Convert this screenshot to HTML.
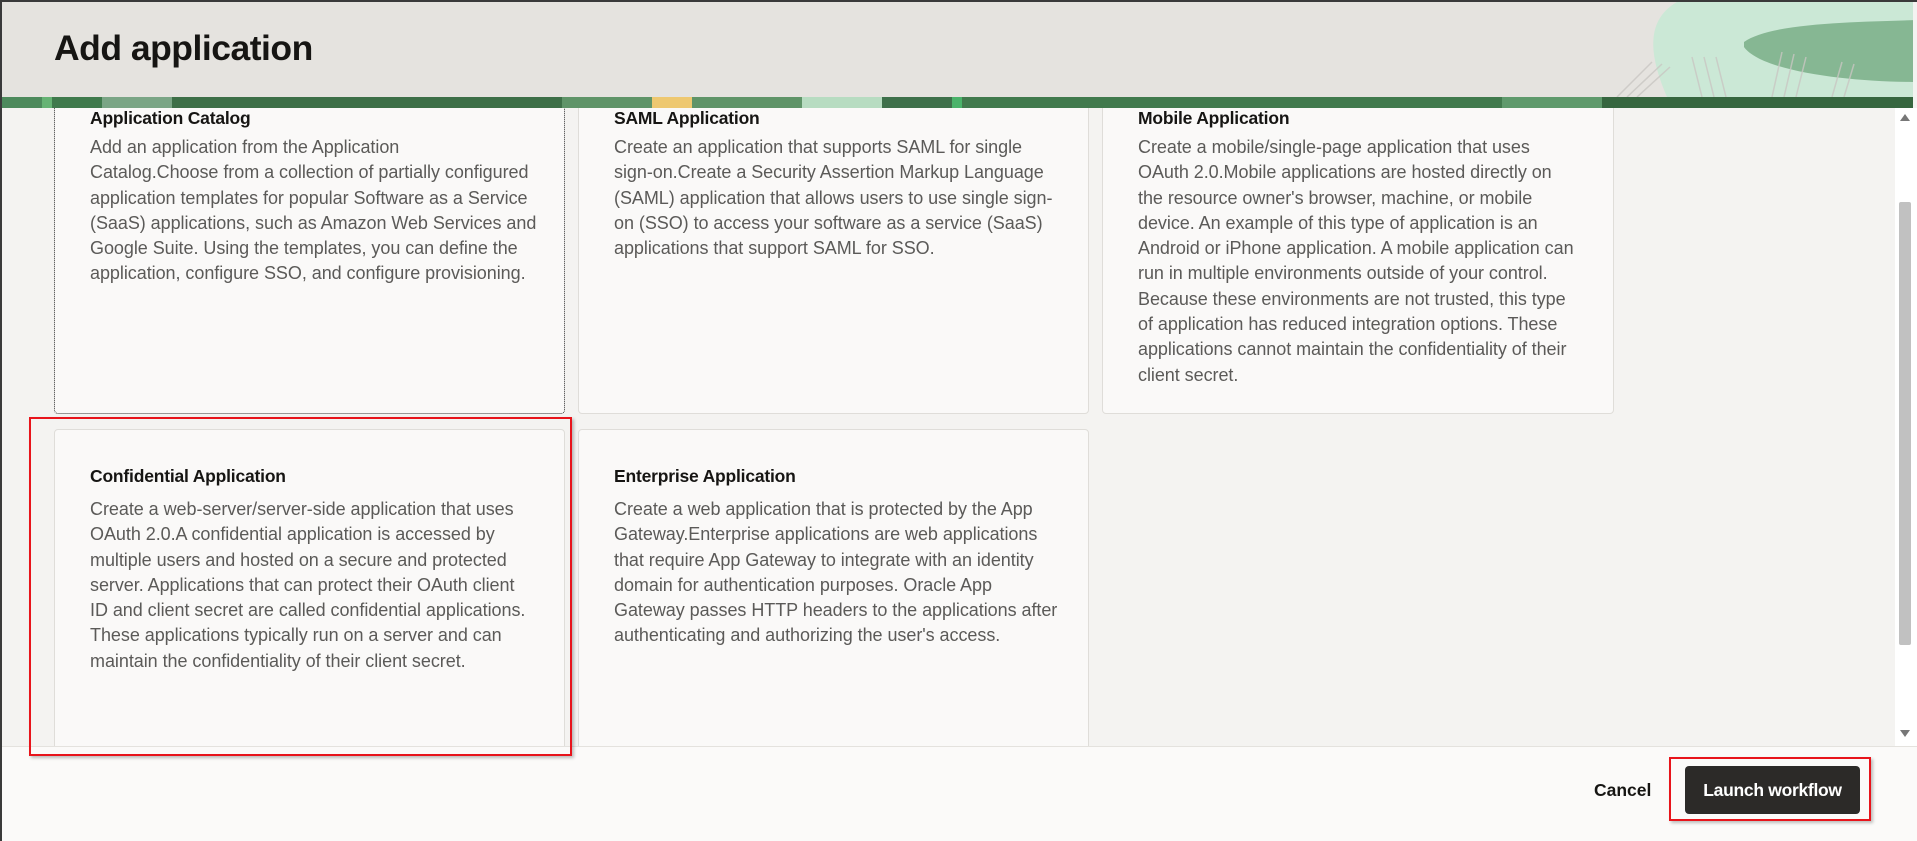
<!DOCTYPE html>
<html><head><meta charset="utf-8"><style>
*{box-sizing:border-box;margin:0;padding:0}
body{width:1917px;height:841px;overflow:hidden;background:#f4f3f1;font-family:"Liberation Sans",sans-serif;position:relative}
.frame{position:absolute;left:0;top:0;width:1917px;height:841px;border-top:2px solid #3a3a3a;border-left:2px solid #3a3a3a;z-index:20}
.header{position:absolute;left:2px;top:2px;width:1911px;height:95px;background:#e5e3df;overflow:hidden;z-index:10}
.header h1{position:absolute;left:52px;top:26px;font-size:35.5px;font-weight:bold;color:#161513;letter-spacing:-0.5px}
.band{position:absolute;left:2px;top:97px;width:1911px;height:11px;z-index:10;background:linear-gradient(90deg,#4d8a5c 0,#4d8a5c 40px,#66b374 40px,#66b374 50px,#3f7a4c 50px,#3f7a4c 100px,#7aa585 100px,#7aa585 170px,#3d6f47 170px,#3d6f47 560px,#5f9468 560px,#5f9468 650px,#eec870 650px,#eec870 690px,#5f9468 690px,#5f9468 800px,#b7dcc1 800px,#b7dcc1 880px,#3e704a 880px,#3e704a 950px,#4ab36a 950px,#4ab36a 960px,#417a4d 960px,#417a4d 1500px,#5f9a6c 1500px,#5f9a6c 1600px,#36663f 1600px)}
.card{position:absolute;background:#faf9f8;border:1px solid #dfddd9;border-radius:4px}
.card h3{position:absolute;left:35px;font-size:17.5px;font-weight:bold;color:#161513;letter-spacing:-0.2px}
.card p{position:absolute;left:35px;font-size:18px;line-height:25.3px;color:#5b5a58;letter-spacing:-0.05px;white-space:nowrap}
.footer{position:absolute;left:2px;top:746px;width:1915px;height:95px;background:#fbfaf9;border-top:1px solid #e4e2de;z-index:5}
.sb{position:absolute;left:1895px;top:108px;width:22px;height:638px;background:#fff}
.thumb{position:absolute;left:1899px;top:202px;width:12px;height:443px;background:#c1c1c1;border-radius:2px}
</style></head><body>
<div class="header">
<h1>Add application</h1>
<svg style="position:absolute;left:0;top:0" width="1911" height="95">
<path d="M1675 0 L1913 0 L1913 95 L1665 95 C1650 60 1640 20 1675 0Z" fill="#cbe8d6"/>
<path d="M1742 40 C1770 20 1860 20 1913 18 L1913 80 C1850 80 1760 70 1742 45Z" fill="#86b793"/>
<g stroke="#c8c6c2" stroke-width="1.5" fill="none" opacity="0.8">
<path d="M1615 95 L1650 60 M1625 95 L1660 62 M1635 95 L1668 65 M1700 95 L1690 55 M1712 95 L1702 55 M1724 95 L1714 55 M1770 95 L1780 50 M1782 95 L1792 52 M1794 95 L1804 55 M1830 95 L1840 60 M1842 95 L1852 62"/>
</g>
</svg>
</div>
<div class="band"></div>

<div class="card" style="left:54px;top:90px;width:511px;height:324px;border:1px dotted #333">
<h3 style="top:17px">Application Catalog</h3>
<p style="top:44px">Add an application from the Application<br>Catalog.Choose from a collection of partially configured<br>application templates for popular Software as a Service<br>(SaaS) applications, such as Amazon Web Services and<br>Google Suite. Using the templates, you can define the<br>application, configure SSO, and configure provisioning.</p>
</div>
<div class="card" style="left:578px;top:90px;width:511px;height:324px">
<h3 style="top:17px">SAML Application</h3>
<p style="top:44px">Create an application that supports SAML for single<br>sign-on.Create a Security Assertion Markup Language<br>(SAML) application that allows users to use single sign-<br>on (SSO) to access your software as a service (SaaS)<br>applications that support SAML for SSO.</p>
</div>
<div class="card" style="left:1102px;top:90px;width:512px;height:324px">
<h3 style="top:17px">Mobile Application</h3>
<p style="top:44px">Create a mobile/single-page application that uses<br>OAuth 2.0.Mobile applications are hosted directly on<br>the resource owner's browser, machine, or mobile<br>device. An example of this type of application is an<br>Android or iPhone application. A mobile application can<br>run in multiple environments outside of your control.<br>Because these environments are not trusted, this type<br>of application has reduced integration options. These<br>applications cannot maintain the confidentiality of their<br>client secret.</p>
</div>

<div class="card" style="left:54px;top:429px;width:511px;height:340px">
<h3 style="top:36px">Confidential Application</h3>
<p style="top:67px">Create a web-server/server-side application that uses<br>OAuth 2.0.A confidential application is accessed by<br>multiple users and hosted on a secure and protected<br>server. Applications that can protect their OAuth client<br>ID and client secret are called confidential applications.<br>These applications typically run on a server and can<br>maintain the confidentiality of their client secret.</p>
</div>
<div class="card" style="left:578px;top:429px;width:511px;height:340px">
<h3 style="top:36px">Enterprise Application</h3>
<p style="top:67px">Create a web application that is protected by the App<br>Gateway.Enterprise applications are web applications<br>that require App Gateway to integrate with an identity<br>domain for authentication purposes. Oracle App<br>Gateway passes HTTP headers to the applications after<br>authenticating and authorizing the user's access.</p>
</div>

<div class="sb"></div>
<div class="thumb"></div>
<div style="position:absolute;left:1900px;top:114px;width:0;height:0;border-left:5px solid transparent;border-right:5px solid transparent;border-bottom:7px solid #777"></div>
<div style="position:absolute;left:1900px;top:730px;width:0;height:0;border-left:5px solid transparent;border-right:5px solid transparent;border-top:7px solid #777"></div>

<div class="footer">
<div style="position:absolute;left:1592px;top:33px;font-size:17.5px;font-weight:bold;color:#161513">Cancel</div>
<div style="position:absolute;left:1683px;top:19px;width:175px;height:48px;background:#2c2a28;border-radius:4px;color:#fff;font-size:17.5px;font-weight:bold;text-align:center;line-height:48px;letter-spacing:-0.3px">Launch workflow</div>
</div>
<div style="position:absolute;left:29px;top:417px;width:543px;height:339px;border:2px solid #e8141b;box-shadow:2px 2px 3px rgba(0,0,0,.25);z-index:15"></div>
<div style="position:absolute;left:1669px;top:757px;width:202px;height:64px;border:2px solid #e8141b;box-shadow:2px 2px 3px rgba(0,0,0,.25);z-index:15"></div>
<div class="frame"></div>
</body></html>
